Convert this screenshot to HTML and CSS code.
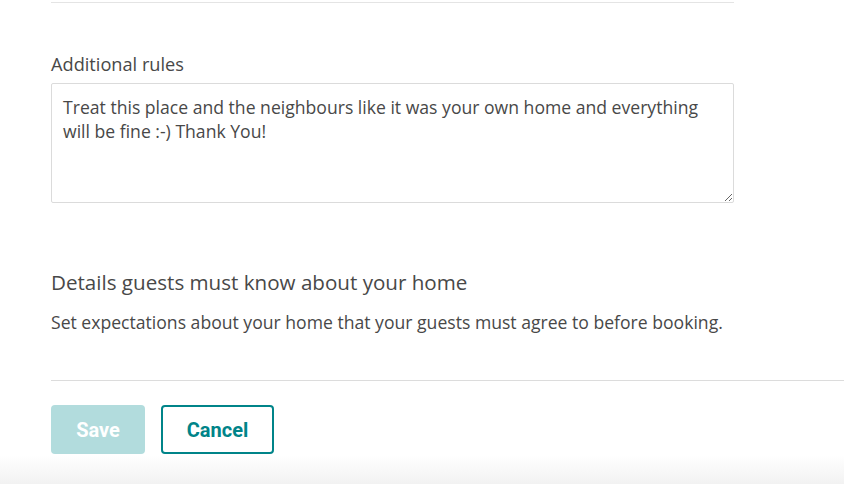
FILE: index.html
```html
<!DOCTYPE html>
<html>
<head>
<meta charset="utf-8">
<link rel="stylesheet" href="styles.css">
</head>
<body>
<div class="page">
  <div class="column">
    <hr class="rule-top">
    <section class="field">
      <label class="label" for="rules">Additional rules</label>
      <textarea id="rules" class="textarea">Treat this place and the neighbours like it was your own home and everything will be fine :-) Thank You!</textarea>
    </section>
    <section class="details">
      <h2 class="heading">Details guests must know about your home</h2>
      <p class="sub">Set expectations about your home that your guests must agree to before booking.</p>
    </section>
  </div>
  <div class="actions">
    <button class="btn btn-save" type="button">Save</button>
    <button class="btn btn-cancel" type="button">Cancel</button>
  </div>
</div>
<div class="footer-shade"></div>
</body>
</html>
```
FILE: styles.css
```css
html, body {
  margin: 0;
  padding: 0;
  background: #fff;
  height: 100%;
  overflow: hidden;
}
body {
  font-family: "Open Sans", "Liberation Sans", sans-serif;
  color: #484848;
  display: flex;
  flex-direction: column;
}
.page {
  padding: 2px 0 0 51px;
  flex: 1;
}
.column {
  width: 683px;
}
.rule-top {
  margin: 0;
  border: 0;
  border-top: 1px solid #e4e4e4;
}
.field {
  margin-top: 50px;
}
.label {
  display: block;
  font-size: 18.2px;
  line-height: 22px;
  margin-bottom: 8px;
}
.textarea {
  display: block;
  box-sizing: border-box;
  width: 683px;
  height: 120px;
  margin: 0;
  border: 1px solid #dbdbdb;
  border-radius: 2px;
  padding: 11px 11px;
  font-family: "Open Sans", "Liberation Sans", sans-serif;
  font-size: 17.6px;
  line-height: 24px;
  color: #484848;
  resize: both;
  outline: none;
}
.details {
  margin-top: 66px;
}
.heading {
  margin: 0;
  font-size: 20.6px;
  font-weight: 400;
  line-height: 26px;
}
.sub {
  margin: 16px 0 0;
  font-size: 17.6px;
  line-height: 22px;
}
.actions {
  margin-top: 47px;
  border-top: 1px solid #dcdcdc;
  padding-top: 24px;
  display: flex;
  gap: 16px;
}
.btn {
  box-sizing: border-box;
  height: 49px;
  border-radius: 4px;
  font-family: "Roboto", "Liberation Sans", sans-serif;
  font-size: 20px;
  font-weight: 700;
  padding: 0;
  cursor: pointer;
}
.btn-save {
  width: 94px;
  background: #b2dcdd;
  border: 0;
  color: #fff;
}
.btn-cancel {
  width: 113px;
  background: #fff;
  border: 2px solid #008489;
  color: #008489;
}
.footer-shade {
  height: 29px;
  background: linear-gradient(#ffffff, #f2f2f2);
}
```
